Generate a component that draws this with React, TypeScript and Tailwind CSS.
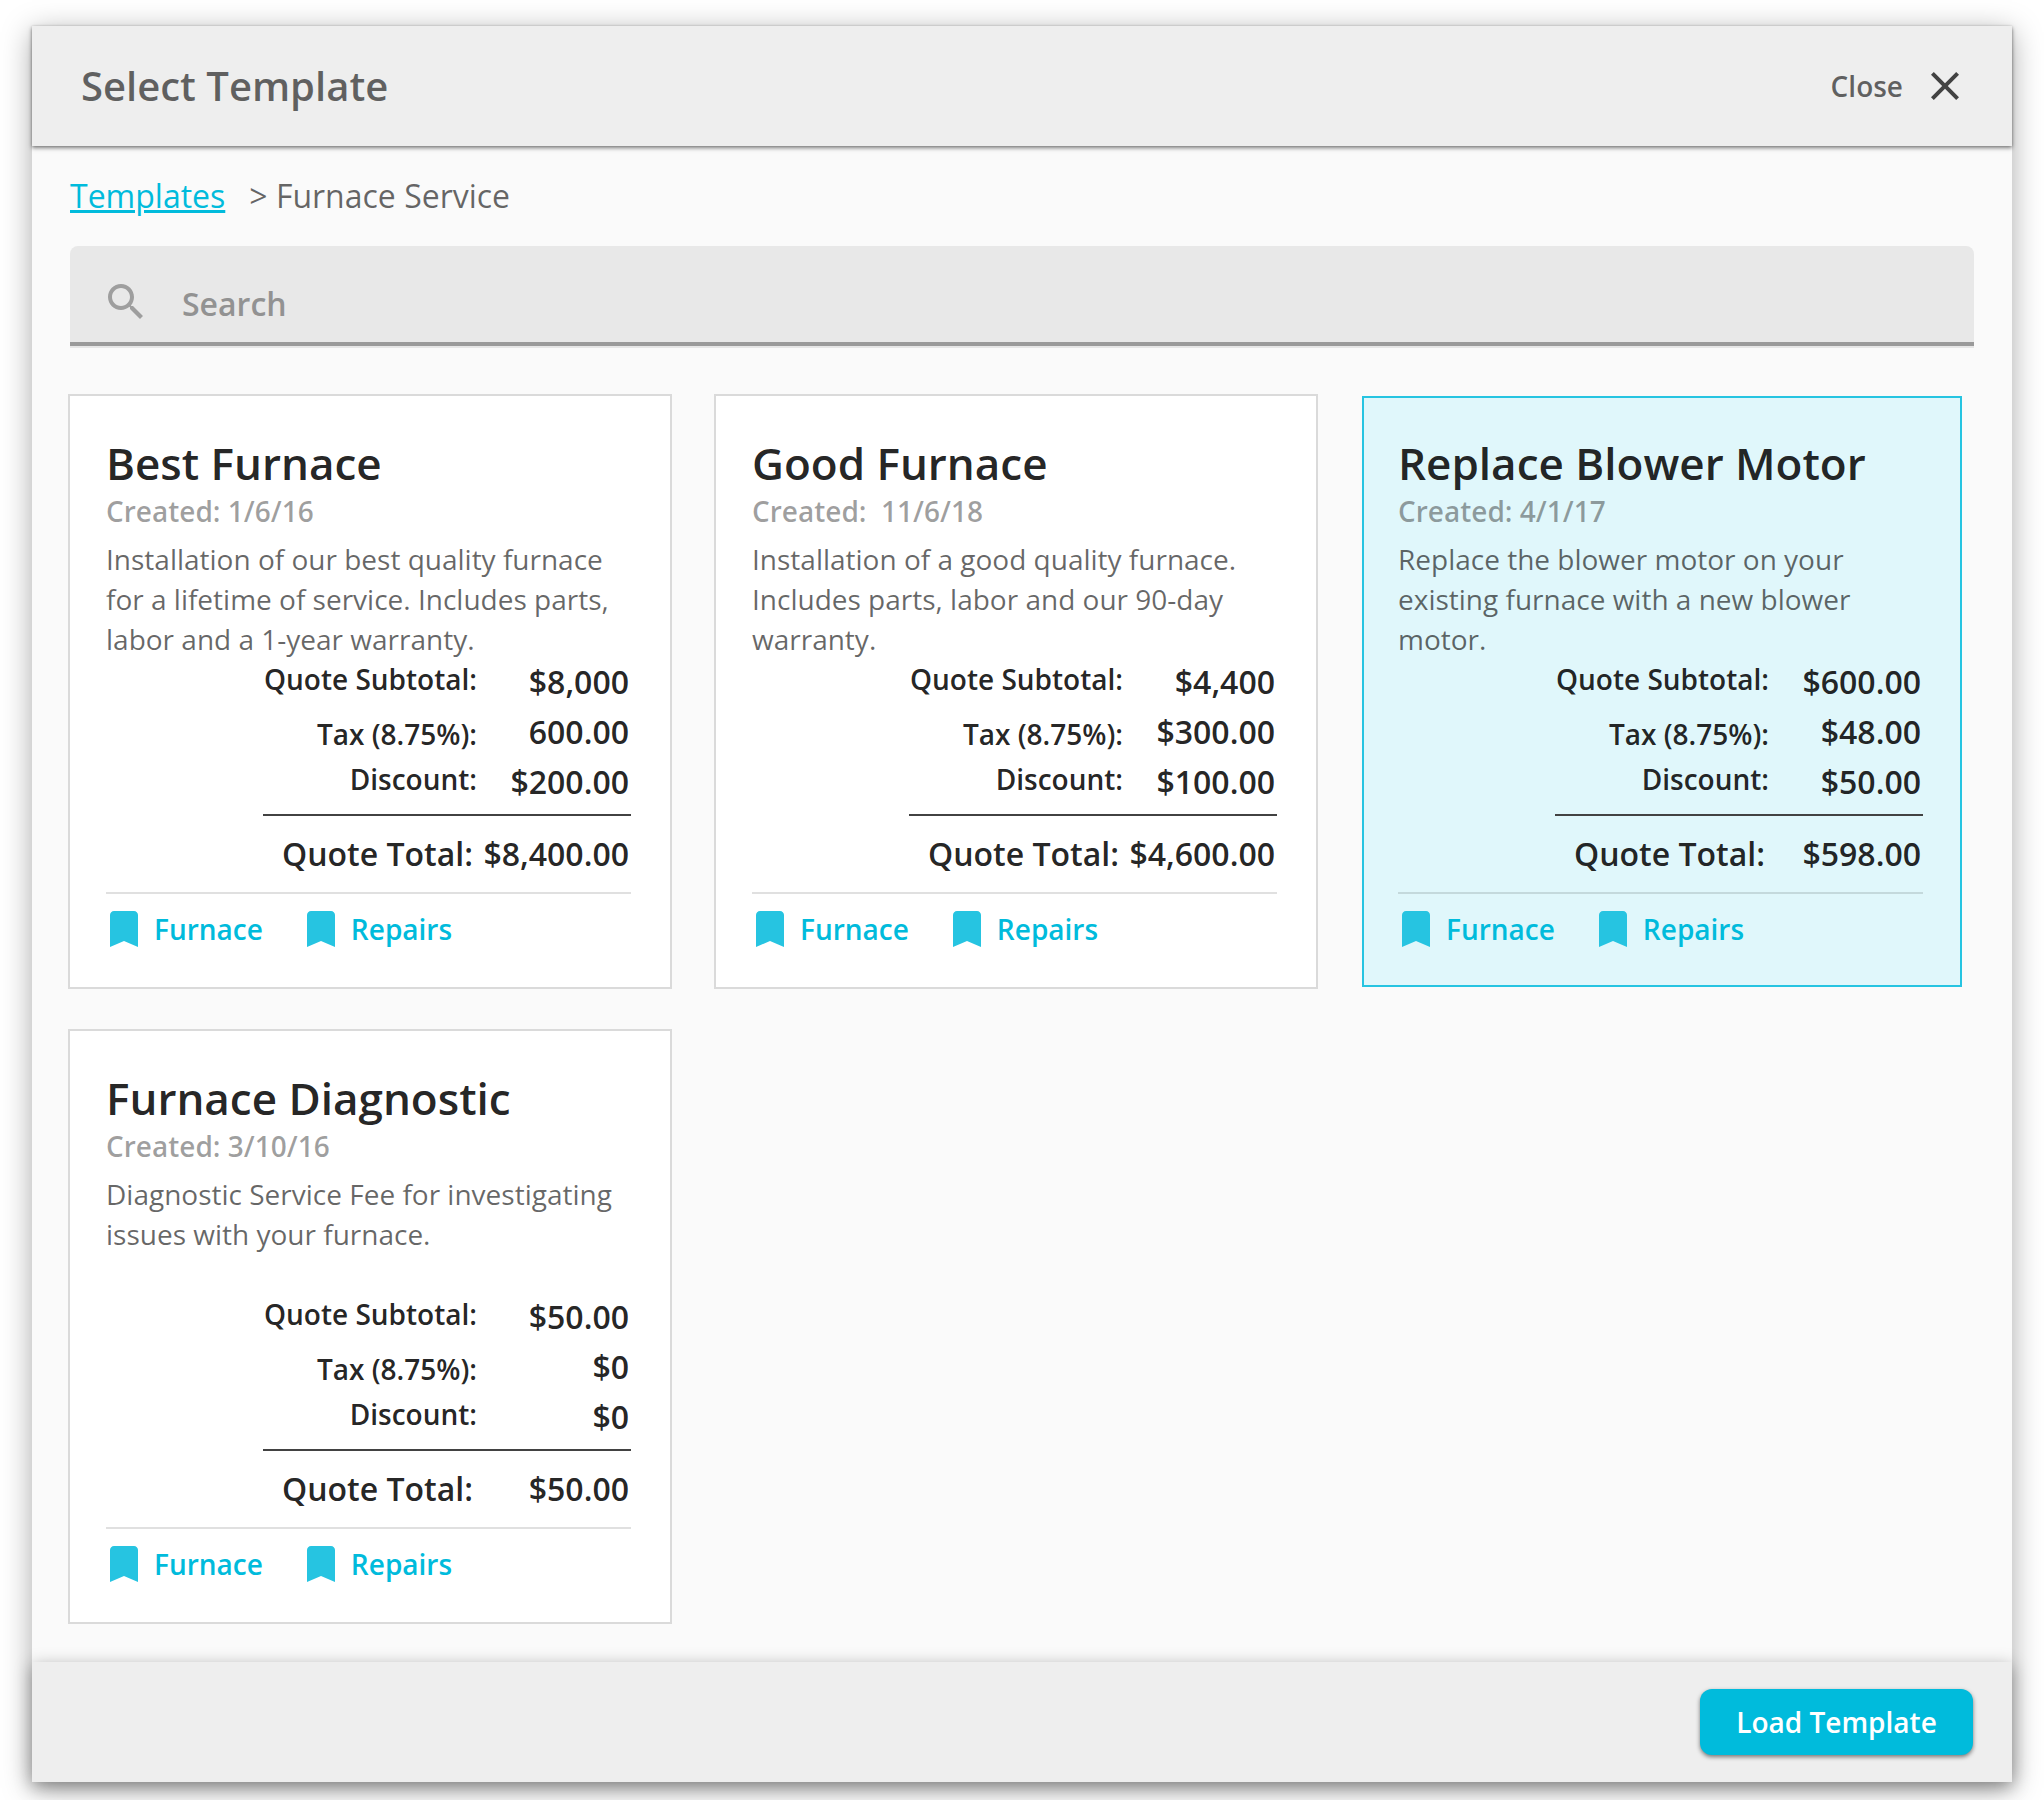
import { useState } from "react";

type Template = {
  id: string;
  title: string;
  created: string;
  description: string;
  subtotal: string;
  tax: string;
  discount: string;
  total: string;
};

const templates: Template[] = [
  {
    id: "best",
    title: "Best Furnace",
    created: "Created: 1/6/16",
    description:
      "Installation of our best quality furnace for a lifetime of service. Includes parts, labor and a 1-year warranty.",
    subtotal: "$8,000",
    tax: "600.00",
    discount: "$200.00",
    total: "$8,400.00",
  },
  {
    id: "good",
    title: "Good Furnace",
    created: "Created:  11/6/18",
    description:
      "Installation of a good quality furnace. Includes parts, labor and our 90-day warranty.",
    subtotal: "$4,400",
    tax: "$300.00",
    discount: "$100.00",
    total: "$4,600.00",
  },
  {
    id: "blower",
    title: "Replace Blower Motor",
    created: "Created: 4/1/17",
    description:
      "Replace the blower motor on your existing furnace with a new blower motor.",
    subtotal: "$600.00",
    tax: "$48.00",
    discount: "$50.00",
    total: "$598.00",
  },
  {
    id: "diagnostic",
    title: "Furnace Diagnostic",
    created: "Created: 3/10/16",
    description:
      "Diagnostic Service Fee for investigating issues with your furnace.",
    subtotal: "$50.00",
    tax: "$0",
    discount: "$0",
    total: "$50.00",
  },
];

const tags = ["Furnace", "Repairs"];

function SearchIcon() {
  return (
    <svg viewBox="0 0 24 24" className="size-12 shrink-0 fill-[#9e9e9e]" aria-hidden="true">
      <path d="M15.5 14h-.79l-.28-.27C15.41 12.59 16 11.11 16 9.5 16 5.91 13.09 3 9.5 3S3 5.91 3 9.5 5.91 16 9.5 16c1.61 0 3.09-.59 4.23-1.57l.27.28v.79l5 4.99L20.49 19l-4.99-5zm-6 0C7.01 14 5 11.99 5 9.5S7.01 5 9.5 5 14 7.01 14 9.5 11.99 14 9.5 14z" />
    </svg>
  );
}

function CloseIcon() {
  return (
    <svg viewBox="5 5 14 14" className="size-7 shrink-0 fill-[#424242]" aria-hidden="true">
      <path d="M19 6.41L17.59 5 12 10.59 6.41 5 5 6.41 10.59 12 5 17.59 6.41 19 12 13.41 17.59 19 19 17.59 13.41 12z" />
    </svg>
  );
}

function BookmarkIcon() {
  return (
    <svg viewBox="5 3 14 18" className="h-9 w-7 shrink-0 fill-[#26c4e1]" aria-hidden="true">
      <path d="M17 3H7c-1.1 0-2 .9-2 2v16l7-3 7 3V5c0-1.1-.9-2-2-2z" />
    </svg>
  );
}

function QuoteTable({ template }: { template: Template }) {
  return (
    <table className="ml-auto w-[368px] table-fixed border-collapse text-right font-semibold whitespace-nowrap text-black/87">
      <colgroup>
        <col className="w-[214px]" />
        <col />
      </colgroup>
      <tbody>
        <tr className="h-[50px]">
          <th scope="row" className="text-right align-top text-[28px]/[40px] font-semibold">
            Quote Subtotal:
          </th>
          <td className="pr-0.5 align-top text-[32px]/[46px]">{template.subtotal}</td>
        </tr>
        <tr className="h-[50px]">
          <th scope="row" className="text-right align-middle text-[28px]/[40px] font-semibold">
            Tax (8.75%):
          </th>
          <td className="pr-0.5 align-top text-[32px]/[46px]">{template.tax}</td>
        </tr>
        <tr className="h-[56px]">
          <th scope="row" className="text-right align-top text-[28px]/[40px] font-semibold">
            Discount:
          </th>
          <td className="pr-0.5 align-top text-[32px]/[46px]">{template.discount}</td>
        </tr>
      </tbody>
      <tfoot>
        <tr className="border-t-2 border-[#424242] text-[32px]/[76px]">
          <th scope="row" className="pr-1 text-right font-semibold">
            Quote Total:
          </th>
          <td className="pr-0.5">{template.total}</td>
        </tr>
      </tfoot>
    </table>
  );
}

function TemplateCard({
  template,
  selected,
  onSelect,
}: {
  template: Template;
  selected: boolean;
  onSelect: () => void;
}) {
  return (
    <article
      onClick={onSelect}
      className={
        "cursor-pointer pt-[38px] pr-[39px] pb-10 pl-9 " +
        (selected
          ? "bg-[#e0f7fb] ring-2 ring-[#26c4e1] ring-inset"
          : "bg-white ring-2 ring-[#dadada]")
      }
    >
      <h2 className="text-[44px]/[58px] font-semibold text-black/87">
        <button type="button" aria-pressed={selected} className="cursor-pointer text-left">
          {template.title}
        </button>
      </h2>
      <p className="text-[28px]/[38px] font-semibold whitespace-pre text-black/38">
        {template.created}
      </p>
      <p className="mt-[9px] min-h-[120px] text-[28px]/[40px] text-black/60">
        {template.description}
      </p>
      <QuoteTable template={template} />
      <ul className="flex gap-11 border-t-2 border-black/12 pt-[17px] pl-1">
        {tags.map((tag) => (
          <li key={tag}>
            <a
              href={"#" + tag.toLowerCase()}
              className="flex items-center gap-4 text-[28px]/[36px] font-semibold text-[#00bbdc]"
            >
              <BookmarkIcon />
              {tag}
            </a>
          </li>
        ))}
      </ul>
    </article>
  );
}

export default function App() {
  const [selectedId, setSelectedId] = useState("blower");
  const [query, setQuery] = useState("");

  return (
    <div className="bg-white px-8 pt-[26px] pb-[18px] font-['Open_Sans','Noto_Sans',sans-serif]">
      <section
        role="dialog"
        aria-labelledby="dialog-title"
        className="bg-[#fafafa] shadow-[0_6px_28px_rgba(0,0,0,0.34)]"
      >
        <header className="flex h-[120px] items-center justify-between bg-[#eeeeee] pr-[53px] pl-[49px] shadow-[0_2px_4px_rgba(0,0,0,0.5),0_0_2px_rgba(0,0,0,0.12)]">
          <h1 id="dialog-title" className="text-[40px]/[56px] font-semibold text-black/60">
            Select Template
          </h1>
          <button
            type="button"
            className="flex cursor-pointer items-center gap-7 text-[28px]/[40px] font-semibold text-black/60"
          >
            Close
            <CloseIcon />
          </button>
        </header>

        <main className="px-[38px] pt-7 pb-10">
          <nav aria-label="Breadcrumb" className="flex text-[32px]/[44px] text-black/60">
            <a href="#templates" className="mr-6 text-[#00bbdc] underline">
              Templates
            </a>
            <span>&gt; Furnace Service</span>
          </nav>

          <div className="mt-7 border-b-2 border-[#e6e6e6]">
            <label className="flex h-[100px] items-center rounded-t-lg border-b-4 border-[#9a9a9a] bg-[#e8e8e8] pt-4 pr-8 pl-8">
              <SearchIcon />
              <input
                type="search"
                aria-label="Search"
                value={query}
                onChange={(event) => setQuery(event.target.value)}
                placeholder="Search"
                className="ml-8 min-w-0 flex-1 bg-transparent pt-1 text-[32px]/[44px] font-semibold text-black/87 outline-none placeholder:text-[#929292]"
              />
            </label>
          </div>

          <div className="mt-12 grid grid-cols-3 gap-x-[46px] gap-y-11 pr-3">
            {templates.map((template) => (
              <TemplateCard
                key={template.id}
                template={template}
                selected={template.id === selectedId}
                onSelect={() => setSelectedId(template.id)}
              />
            ))}
          </div>
        </main>

        <footer className="flex h-[120px] items-center justify-end bg-[#eeeeee] pr-[39px] shadow-[0_4px_16px_rgba(0,0,0,0.34)]">
          <button
            type="button"
            className="h-[66px] w-[273px] cursor-pointer rounded-xl bg-[#00bbdc] text-[28px]/[40px] font-semibold text-white shadow-[0_2px_4px_rgba(0,0,0,0.5)]"
          >
            Load Template
          </button>
        </footer>
      </section>
    </div>
  );
}
